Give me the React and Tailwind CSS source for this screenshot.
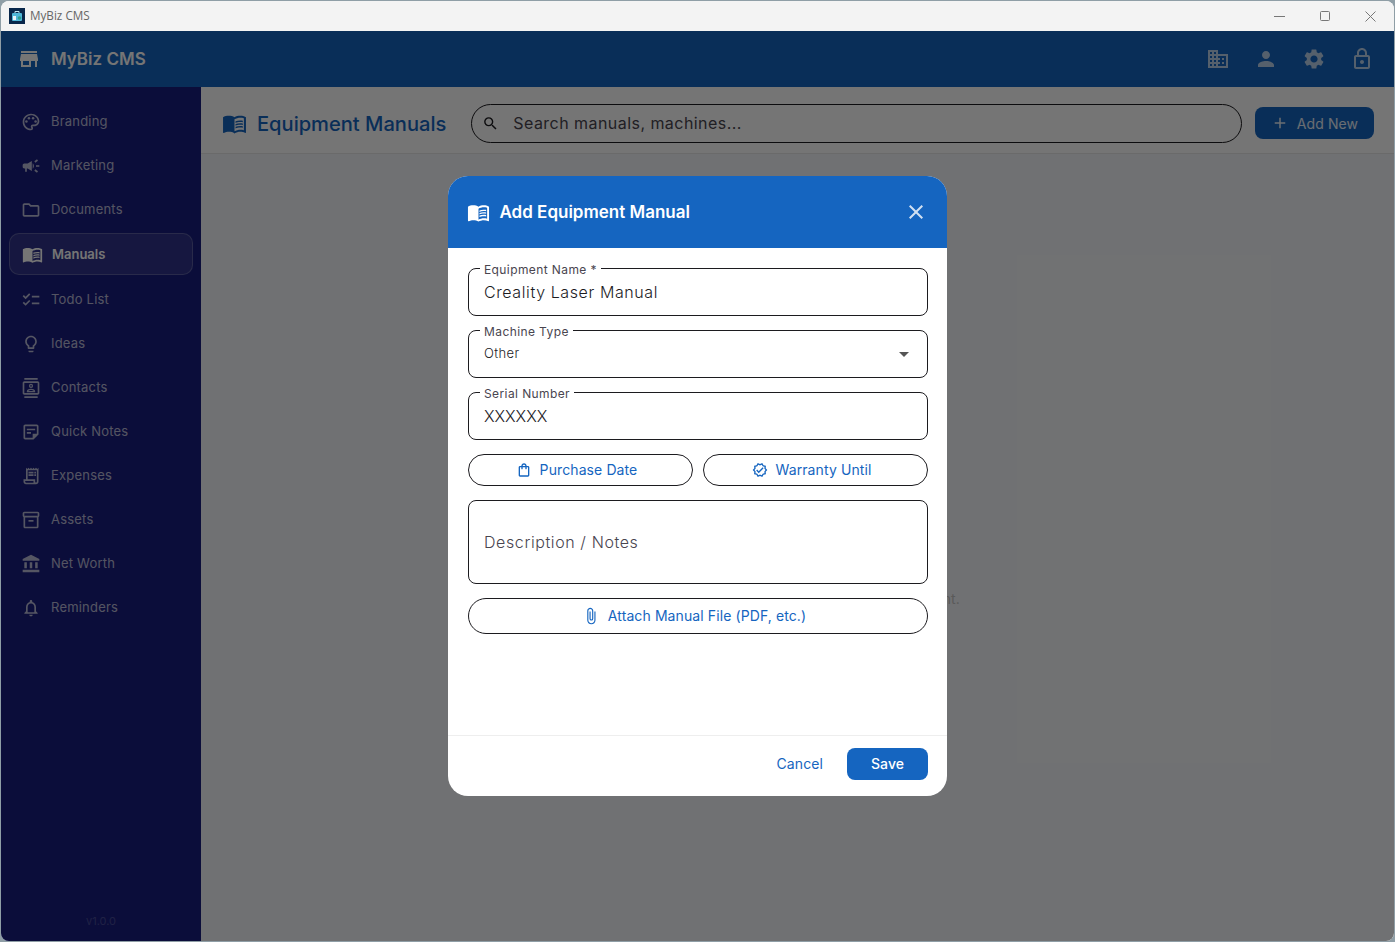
import React from 'react';
import {
  MdStore, MdOutlinePalette, MdCampaign, MdOutlineFolder, MdMenuBook, MdChecklist,
  MdOutlineLightbulb, MdOutlineContacts, MdOutlineStickyNote2, MdOutlineReceiptLong, MdOutlineInventory2,
  MdAccountBalance, MdOutlineNotifications, MdBusiness, MdPerson, MdSettings, MdOutlineLock, MdAdd, MdSearch,
  MdClose, MdArrowDropDown, MdOutlineShoppingBag, MdOutlineVerified, MdAttachFile,
} from 'react-icons/md';

const navItems = [
  { label: 'Branding', icon: MdOutlinePalette },
  { label: 'Marketing', icon: MdCampaign },
  { label: 'Documents', icon: MdOutlineFolder },
  { label: 'Manuals', icon: MdMenuBook, active: true },
  { label: 'Todo List', icon: MdChecklist },
  { label: 'Ideas', icon: MdOutlineLightbulb },
  { label: 'Contacts', icon: MdOutlineContacts },
  { label: 'Quick Notes', icon: MdOutlineStickyNote2 },
  { label: 'Expenses', icon: MdOutlineReceiptLong },
  { label: 'Assets', icon: MdOutlineInventory2 },
  { label: 'Net Worth', icon: MdAccountBalance },
  { label: 'Reminders', icon: MdOutlineNotifications },
];

function NavItem({ item }) {
  const Icon = item.icon;
  if (item.active) {
    return (
      <div className="h-[46px] pt-[1px] px-2">
        <div className="h-[42px] flex items-center pl-[12px] rounded-[10px] border border-white/20 bg-white/10 text-white">
          <Icon className="text-[21px] w-[21px] shrink-0" />
          <span className="ml-[9px] pt-[1px] text-[13px] font-semibold">{item.label}</span>
        </div>
      </div>
    );
  }
  return (
    <div className="h-[44px] flex items-center pl-[20px] text-white/70">
      <Icon className="text-[20px] w-[20px] shrink-0" />
      <span className="ml-[10px] text-[13px] tracking-[0.2px]">{item.label}</span>
    </div>
  );
}

function Field({ label, children }) {
  return (
    <div className="relative h-[48px] rounded-lg border border-[#1c1b1f] flex items-center justify-between pl-[15px] pr-[11px]">
      <span className="absolute -top-[6px] left-[11px] bg-white px-[4px] text-[12px] leading-[14px] tracking-[0.4px] text-[#49454f]">{label}</span>
      {children}
    </div>
  );
}

function PillButton({ icon: Icon, iconSize, children, className }) {
  return (
    <button className={`rounded-full border border-[#1c1b1f] flex items-center justify-center pb-[1px] pr-[8px] text-[#1565c0] text-[14px] tracking-[0.1px] ${className}`}>
      <Icon className={`${iconSize} mr-[8px]`} />
      {children}
    </button>
  );
}

export default function App() {
  return (
    <div className="h-screen bg-[#8f9ea6] p-[1px] overflow-hidden font-['Inter',sans-serif]">
      <div className="relative h-full rounded-lg overflow-hidden flex flex-col bg-white">
        {/* window title bar */}
        <div className="h-[30px] shrink-0 bg-[#f3f3f3] flex items-center pl-[8px] pr-[18px]">
          <svg width="16" height="16" viewBox="0 0 16 16">
            <rect width="16" height="16" fill="#08264a" />
            <rect x="3" y="5" width="10" height="8" rx="1" fill="#4fb6d8" />
            <path d="M6 5V3.5h4V5" fill="none" stroke="#bfe6f2" strokeWidth="1" />
            <rect x="4" y="8" width="3" height="4" fill="#e8f4fa" />
            <circle cx="10.5" cy="10" r="1.8" fill="#2e9e8f" />
          </svg>
          <span className="ml-[5px] text-[11.7px] text-[#666] font-['Open_Sans',sans-serif]">MyBiz CMS</span>
          <div className="ml-auto flex items-center gap-[35px]">
            <svg width="11" height="11" viewBox="0 0 11 11"><path d="M0 5.5h11" stroke="#777" strokeWidth="1" /></svg>
            <svg width="10" height="10" viewBox="0 0 10 10"><rect x="0.5" y="0.5" width="9" height="9" rx="1" fill="none" stroke="#777" /></svg>
            <svg width="11" height="11" viewBox="0 0 11 11"><path d="M0.5 0.5l10 10M10.5 0.5l-10 10" stroke="#777" strokeWidth="1" /></svg>
          </div>
        </div>

        {/* app bar */}
        <div className="h-[56px] shrink-0 bg-[#1565c0] text-white flex items-center pl-[16px] pr-[20px]">
          <MdStore className="text-[24px]" />
          <span className="ml-[10px] pt-[1px] text-[17px] font-semibold">MyBiz CMS</span>
          <div className="ml-auto flex items-center gap-[24px] text-white/70">
            <MdBusiness className="text-[24px]" />
            <MdPerson className="text-[24px]" />
            <MdSettings className="text-[24px]" />
            <MdOutlineLock className="text-[24px]" />
          </div>
        </div>

        <div className="flex-1 flex min-h-0">
          {/* sidebar */}
          <aside className="w-[200px] shrink-0 bg-[#1a1e7e] flex flex-col pt-[13px]">
            {navItems.map((item) => <NavItem key={item.label} item={item} />)}
            <div className="mt-auto pb-[12px] text-center text-[11px] text-white/20">v1.0.0</div>
          </aside>

          {/* page */}
          <main className="flex-1 min-w-0 bg-[#f5f7fa] flex flex-col">
            <div className="h-[67px] shrink-0 bg-white border-b border-[#e8e8e8] flex items-center pt-[6px] pl-[21px] pr-[20px]">
              <MdMenuBook className="text-[25px] text-[#1565c0]" />
              <span className="ml-[10px] pt-[2px] text-[20.1px] font-medium text-[#1565c0] whitespace-nowrap">Equipment Manuals</span>
              <div className="ml-[25px] flex-1 h-[39px] rounded-full border border-[#1c1b1f] flex items-center pl-[10px]">
                <MdSearch className="text-[17px] text-[#1c1b1f]" />
                <span className="ml-[14px] text-[16px] tracking-[0.45px] text-[#49454f]">Search manuals, machines...</span>
              </div>
              <button className="ml-[13px] w-[119px] h-[32px] rounded-lg bg-[#1565c0] text-white/90 flex items-center justify-center text-[14px] tracking-[0.1px]">
                <MdAdd className="text-[18px] mr-[8px]" />
                Add New
              </button>
            </div>
            <div className="flex-1 pt-[434px] text-center text-[14px] text-[#c4c4c4] whitespace-nowrap">
              No manuals added yet. Add your first equipment.
            </div>
          </main>
        </div>

        {/* modal barrier */}
        <div className="absolute inset-x-0 top-[30px] bottom-0 bg-black/54 flex items-center justify-center">
          <div className="w-[499px] h-[620px] rounded-[20px] overflow-hidden bg-white flex flex-col">
            <div className="h-[72px] shrink-0 bg-[#1565c0] text-white flex items-center pl-[19px] pr-[19px]">
              <MdMenuBook className="text-[23px]" />
              <span className="ml-[9.5px] pt-[1px] text-[17px] font-semibold">Add Equipment Manual</span>
              <MdClose className="ml-auto text-[24px] text-white/80" />
            </div>

            <div className="flex-1 min-h-0 pl-[20px] pr-[19px] pt-[20px] flex flex-col gap-[14px]">
              <Field label="Equipment Name *">
                <span className="pb-[1px] text-[16px] font-[350] tracking-[0.6px] text-[#1c1b1f]">Creality Laser Manual</span>
              </Field>
              <Field label="Machine Type">
                <span className="pb-[1px] text-[13px] font-[350] tracking-[0.4px] text-[#1c1b1f]">Other</span>
                <MdArrowDropDown className="text-[24px] text-[#555]" />
              </Field>
              <Field label="Serial Number">
                <span className="pb-[1px] text-[16px] font-[350] tracking-[-0.05px] text-[#1c1b1f]">XXXXXX</span>
              </Field>
              <div className="flex gap-[10px]">
                <PillButton icon={MdOutlineShoppingBag} iconSize="text-[16px]" className="flex-1 h-[32px]">Purchase Date</PillButton>
                <PillButton icon={MdOutlineVerified} iconSize="text-[16px]" className="flex-1 h-[32px]">Warranty Until</PillButton>
              </div>
              <div className="h-[84px] shrink-0 rounded-lg border border-[#1c1b1f] flex items-center pl-[15px]">
                <span className="text-[16px] font-[350] tracking-[0.6px] text-[#49454f]">Description / Notes</span>
              </div>
              <PillButton icon={MdAttachFile} iconSize="text-[18px]" className="h-[36px] shrink-0">Attach Manual File (PDF, etc.)</PillButton>
            </div>

            <div className="h-[61px] shrink-0 border-t border-[#eeeeee] flex items-start justify-end pt-[12px] pr-[19px]">
              <button className="h-[32px] pb-[1px] text-[14px] tracking-[0.1px] text-[#1565c0] mr-[24px]">Cancel</button>
              <button className="w-[81px] h-[32px] pb-[1px] rounded-lg bg-[#1565c0] text-white text-[14px] font-medium tracking-[0.1px]">Save</button>
            </div>
          </div>
        </div>
      </div>
    </div>
  );
}
